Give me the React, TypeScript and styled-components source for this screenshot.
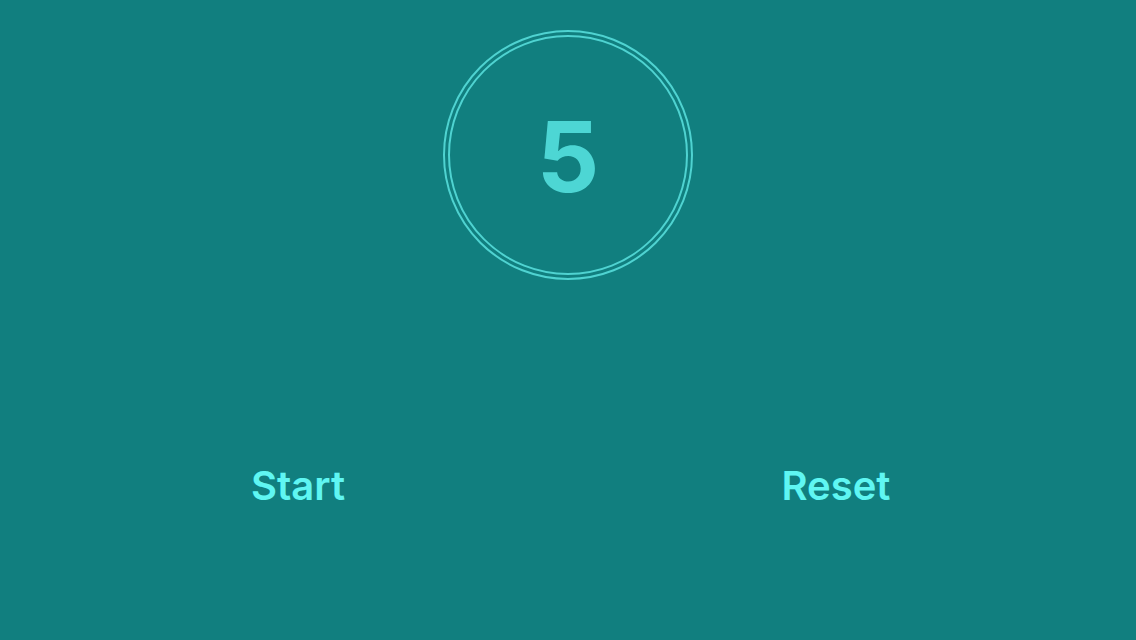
import React, { useState } from 'react';
import styled, { createGlobalStyle } from 'styled-components';

const GlobalStyle = createGlobalStyle`
  html, body {
    margin: 0;
    padding: 0;
    background: #117f7f;
  }
  * {
    box-sizing: border-box;
  }
`;

const Screen = styled.div`
  width: 1136px;
  height: 640px;
  background: #117f7f;
  display: flex;
  flex-direction: column;
  align-items: center;
  padding-top: 30px;
  font-family: Inter, 'Noto Sans', sans-serif;
`;

const OuterRing = styled.div`
  width: 250px;
  height: 250px;
  border-radius: 50%;
  border: 2px solid #4fd3d1;
  display: flex;
  align-items: center;
  justify-content: center;
`;

const InnerRing = styled.div`
  width: 240px;
  height: 240px;
  border-radius: 50%;
  border: 2px solid #4fd3d1;
  display: flex;
  align-items: center;
  justify-content: center;
`;

const Count = styled.span`
  font-size: 98px;
  font-weight: 700;
  color: #4dd6d4;
  line-height: 1;
  margin-top: 4px;
`;

const Controls = styled.div`
  width: 100%;
  display: flex;
  justify-content: space-between;
  padding: 0 202px 0 200px;
  margin-top: 180px;
`;

const ControlButton = styled.button`
  all: unset;
  width: 196px;
  height: 50px;
  display: flex;
  align-items: center;
  justify-content: center;
  font-family: Inter, 'Noto Sans', sans-serif;
  font-size: 40px;
  font-weight: 600;
  color: #5ff6f2;
  cursor: pointer;
`;

const App = () => {
  const [count, setCount] = useState(5);

  return (
    <Screen>
      <GlobalStyle />
      <OuterRing>
        <InnerRing>
          <Count>{count}</Count>
        </InnerRing>
      </OuterRing>
      <Controls>
        <ControlButton onClick={() => setCount(c => (c > 0 ? c - 1 : 0))}>
          Start
        </ControlButton>
        <ControlButton onClick={() => setCount(5)}>Reset</ControlButton>
      </Controls>
    </Screen>
  );
};

export default App;
